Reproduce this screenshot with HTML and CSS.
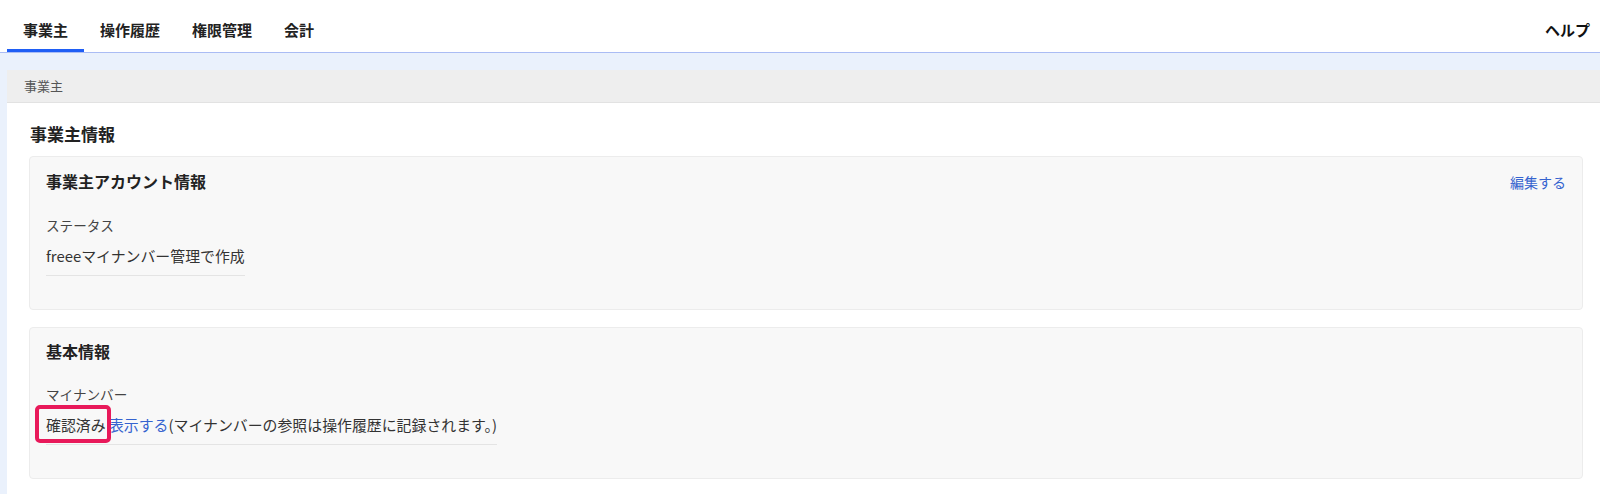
FILE: index.html
```html
<!DOCTYPE html>
<html lang="ja">
<head>
  <meta charset="UTF-8" />
  <meta name="viewport" content="width=device-width, initial-scale=1.0"/>
  <title>事業主</title>
  <link rel="stylesheet" href="styles.css">
</head>
<body>

  <!-- Top tabs -->
  <header class="topbar">
    <nav class="tabs">
      <a class="tab active" href="#">事業主</a>
      <a class="tab" href="#">操作履歴</a>
      <a class="tab" href="#">権限管理</a>
      <a class="tab" href="#">会計</a>
    </nav>
    <a class="help" href="#">ヘルプ</a>
  </header>

  <main class="main">
    <section class="panel">
      <div class="panel-head">事業主</div>
      <div class="panel-body">
        <h1 class="page-title">事業主情報</h1>

        <div class="card">
          <div class="card-head">
            <h2 class="card-title">事業主アカウント情報</h2>
            <a class="link" href="#">編集する</a>
          </div>
          <dl class="field">
            <dt class="field-label">ステータス</dt>
            <dd class="field-value">freeeマイナンバー管理で作成</dd>
          </dl>
        </div>

        <div class="card">
          <div class="card-head">
            <h2 class="card-title">基本情報</h2>
          </div>
          <dl class="field">
            <dt class="field-label">マイナンバー</dt>
            <dd class="field-value"><span class="marked">確認済み</span> <a class="link" href="#">表示する</a>(マイナンバーの参照は操作履歴に記録されます。)</dd>
          </dl>
        </div>
      </div>
    </section>
  </main>

</body>
</html>
```

FILE: styles.css
```css
* {
  box-sizing: border-box;
}

html, body {
  height: 100%;
}

body {
  margin: 0;
  font-family: "Noto Sans CJK JP", "Noto Sans", sans-serif;
  color: #333;
  background: #fff;
  display: flex;
  flex-direction: column;
}

a {
  text-decoration: none;
}

/* Top tabs */
.topbar {
  display: flex;
  justify-content: space-between;
  height: 53px;
  padding: 0 10px 0 7px;
  border-bottom: 1px solid #aabcf4;
  background: #fff;
}

.tabs {
  display: flex;
}

.tab {
  height: 52px;
  padding: 19px 16px 0;
  font-size: 15px;
  line-height: 22px;
  font-weight: bold;
  color: #222;
  border-bottom: 3px solid transparent;
}

.tab.active {
  border-bottom-color: #1f5ef5;
}

.help {
  padding-top: 19px;
  font-size: 15px;
  line-height: 22px;
  font-weight: bold;
  color: #111;
}

/* Main area */
.main {
  flex: 1;
  background: #eaf1fc;
  padding: 17px 0 0 7px;
  display: flex;
}

.panel {
  flex: 1;
  background: #fff;
}

.panel-head {
  height: 33px;
  padding-left: 17px;
  background: #eeeeee;
  border-bottom: 1px solid #e2e2e2;
  font-size: 13px;
  line-height: 32px;
  color: #555;
}

.panel-body {
  padding: 19px 17px 0 22px;
}

.page-title {
  margin: 0 0 10px 1px;
  font-size: 17px;
  line-height: 24px;
  font-weight: bold;
  color: #222;
}

.card {
  background: #f8f8f8;
  border: 1px solid #ececec;
  border-radius: 4px;
  padding: 11px 16px 33px;
  margin-bottom: 17px;
}

.card-head {
  display: flex;
  justify-content: space-between;
  align-items: center;
}

.card-title {
  margin: 0;
  font-size: 16px;
  line-height: 24px;
  font-weight: bold;
  color: #222;
}

.card-head .link {
  font-size: 14px;
  line-height: 24px;
  margin-top: 2px;
}

.link {
  color: #3563cf;
}

.field {
  margin: 21px 0 0;
}

.field-label {
  font-size: 13.6px;
  line-height: 20px;
  color: #444;
}

.field-value {
  width: fit-content;
  margin: 11px 0 0;
  padding-bottom: 9px;
  border-bottom: 1px solid #e4e4e4;
  font-size: 14.9px;
  line-height: 20px;
  color: #333;
}

/* highlight annotation */
.marked {
  position: relative;
}

.marked::after {
  content: "";
  position: absolute;
  left: -11px;
  right: -5px;
  top: -9px;
  bottom: -8px;
  border: 4px solid #e8195a;
  border-radius: 5px;
}
```
